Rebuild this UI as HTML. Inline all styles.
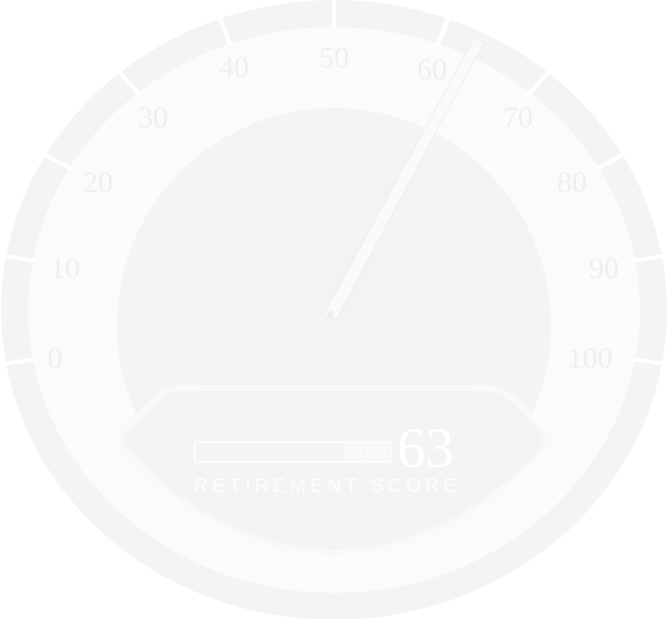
<!DOCTYPE html>
<html><head><style>html,body{margin:0;padding:0;background:#fff;}svg{display:block}</style></head>
<body>
<svg width="668" height="619" viewBox="0 0 668 619" xmlns="http://www.w3.org/2000/svg">
<ellipse cx="334" cy="310" rx="333" ry="310" fill="#f4f4f4"/>
<ellipse cx="334" cy="310" rx="306" ry="283" fill="#fbfbfb"/>
<g stroke="#ffffff" stroke-width="4" transform="translate(334 310) scale(1.075 1) translate(-334 -310)">
<line x1="334" y1="0" x2="334" y2="28" transform="rotate(-100 334 310)"/>
<line x1="334" y1="0" x2="334" y2="28" transform="rotate(-80 334 310)"/>
<line x1="334" y1="0" x2="334" y2="28" transform="rotate(-60 334 310)"/>
<line x1="334" y1="0" x2="334" y2="28" transform="rotate(-40 334 310)"/>
<line x1="334" y1="0" x2="334" y2="28" transform="rotate(-20 334 310)"/>
<line x1="334" y1="0" x2="334" y2="28"/>
<line x1="334" y1="0" x2="334" y2="28" transform="rotate(20 334 310)"/>
<line x1="334" y1="0" x2="334" y2="28" transform="rotate(40 334 310)"/>
<line x1="334" y1="0" x2="334" y2="28" transform="rotate(60 334 310)"/>
<line x1="334" y1="0" x2="334" y2="28" transform="rotate(80 334 310)"/>
<line x1="334" y1="0" x2="334" y2="28" transform="rotate(100 334 310)"/>
</g>
<circle cx="334" cy="325" r="217" fill="#f4f4f4"/>
<circle cx="334" cy="320" r="150" fill="#f3f3f3"/>
<g font-family="Liberation Serif, serif" font-size="30" fill="#efefef" text-anchor="middle">
<text x="55" y="368">0</text><text x="65" y="278">10</text><text x="98" y="192">20</text>
<text x="153" y="127">30</text><text x="234" y="77">40</text><text x="334" y="67">50</text>
<text x="432" y="79">60</text><text x="518" y="127">70</text><text x="572" y="192">80</text>
<text x="604" y="278">90</text><text x="590" y="368">100</text>
</g>
<polygon points="324,314 336,320 484,42 474,38" fill="#fafafa" stroke="#eeeeee" stroke-width="1"/>
<circle cx="331" cy="314" r="3" fill="#eeeeee"/>
<path d="M185,388 L485,388 Q500,388 512,398 L542,428 Q552,440 542,452 Q450,550 334,553 Q218,550 126,452 Q116,440 126,428 L156,398 Q168,388 185,388 Z" fill="#f4f4f4" stroke="#f9f9f9" stroke-width="6"/>
<rect x="195" y="442" width="196" height="20" fill="none" stroke="#fbfbfb" stroke-width="2"/>
<g stroke="#fdfdfd" stroke-width="1.3">
<line x1="346" y1="443" x2="346" y2="462"/><line x1="349" y1="443" x2="349" y2="462"/><line x1="352" y1="443" x2="352" y2="462"/><line x1="355" y1="443" x2="355" y2="462"/><line x1="358" y1="443" x2="358" y2="462"/><line x1="361" y1="443" x2="361" y2="462"/><line x1="364" y1="443" x2="364" y2="462"/><line x1="367" y1="443" x2="367" y2="462"/><line x1="370" y1="443" x2="370" y2="462"/><line x1="373" y1="443" x2="373" y2="462"/><line x1="376" y1="443" x2="376" y2="462"/><line x1="379" y1="443" x2="379" y2="462"/><line x1="382" y1="443" x2="382" y2="462"/><line x1="385" y1="443" x2="385" y2="462"/><line x1="388" y1="443" x2="388" y2="462"/>
</g>
<text x="397" y="467" font-family="Liberation Serif, serif" font-size="57" fill="#ffffff">63</text>
<text x="194" y="492" font-family="Liberation Sans, sans-serif" font-size="19" fill="#fdfdfd" letter-spacing="4.4">RETIREMENT SCORE</text>
</svg>
</body></html>
